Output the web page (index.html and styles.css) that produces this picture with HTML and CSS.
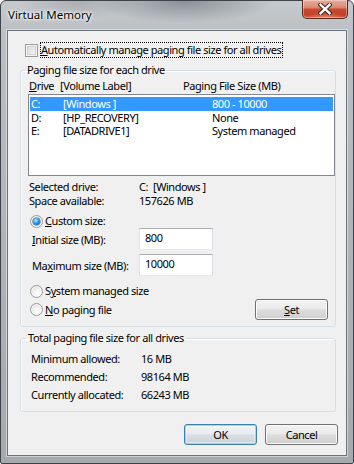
FILE: index.html
```html
<!DOCTYPE html>
<html>
<head>
<meta charset="utf-8">
<title>Virtual Memory</title>
<link rel="stylesheet" href="styles.css">
</head>
<body>
<div class="window">
  <div class="titlebar">
    <span class="title">Virtual Memory</span>
    <button class="close" aria-label="Close">
      <svg width="14" height="12" viewBox="0 0 14 12">
        <path d="M2.5 1.8 L11.5 10.2 M11.5 1.8 L2.5 10.2" stroke="#3b2420" stroke-width="4.4" stroke-linecap="square" fill="none"/>
        <path d="M2.5 1.8 L11.5 10.2 M11.5 1.8 L2.5 10.2" stroke="#ffffff" stroke-width="2.4" stroke-linecap="square" fill="none"/>
      </svg>
    </button>
  </div>
  <div class="client">
    <div class="auto-row">
      <span class="checkbox"></span>
      <span class="focus"><u>A</u>utomatically manage paging file size for all drives</span>
    </div>

    <fieldset class="group g1">
      <legend>Paging file size for each drive</legend>
      <div class="list-head">
        <span><u>D</u>rive</span><span>[Volume Label]</span><span>Paging File Size (MB)</span>
      </div>
      <div class="listbox">
        <div class="lrow sel"><span>C:</span><span>[Windows ]</span><span>800 - 10000</span></div>
        <div class="lrow"><span>D:</span><span>[HP_RECOVERY]</span><span>None</span></div>
        <div class="lrow"><span>E:</span><span>[DATADRIVE1]</span><span>System managed</span></div>
      </div>
      <div class="info">
        <span>Selected drive:</span><span>C:&nbsp; [Windows ]</span>
        <span>Space available:</span><span>157626 MB</span>
      </div>
      <div class="radio-row custom"><span class="radio on"></span><span><u>C</u>ustom size:</span></div>
      <div class="field-row"><span><u>I</u>nitial size (MB):</span><span class="input">800</span></div>
      <div class="field-row second"><span>Ma<u>x</u>imum size (MB):</span><span class="input">10000</span></div>
      <div class="radio-row sys"><span class="radio"></span><span>S<u>y</u>stem managed size</span></div>
      <div class="last-row">
        <div class="radio-row"><span class="radio"></span><span><u>N</u>o paging file</span></div>
        <button class="btn set"><u>S</u>et</button>
      </div>
    </fieldset>

    <fieldset class="group g2">
      <legend>Total paging file size for all drives</legend>
      <div class="totals">
        <span>Minimum allowed:</span><span>16 MB</span>
        <span>Recommended:</span><span>98164 MB</span>
        <span>Currently allocated:</span><span>66243 MB</span>
      </div>
    </fieldset>

    <div class="buttons">
      <button class="btn default">OK</button>
      <button class="btn">Cancel</button>
    </div>
  </div>
</div>
</body>
</html>
```

FILE: styles.css
```css
* { box-sizing: border-box; }
html, body { margin: 0; padding: 0; }
body {
  width: 354px;
  height: 464px;
  overflow: hidden;
  background: #ffffff;
  font-family: "Noto Sans", "Liberation Sans", sans-serif;
  font-size: 11px;
  letter-spacing: -0.42px;
  color: #000;
}
u { text-decoration-thickness: 1px; text-underline-offset: 1px; }

.window {
  width: 354px;
  height: 464px;
  border: 1px solid #3d434a;
  border-radius: 6px 6px 2px 2px;
  padding: 0 6px 7px 6px;
  background:
    radial-gradient(ellipse 90px 22px at 52% 0, rgba(70,74,80,0.45), rgba(70,74,80,0) 100%),
    radial-gradient(ellipse 60px 18px at 22% 0, rgba(90,94,100,0.25), rgba(90,94,100,0) 100%),
    linear-gradient(#c6cacd 0, #bcc0c4 30px, #aeb2b6 60%, #a6aaae 100%);
  display: flex;
  flex-direction: column;
}

.titlebar {
  height: 29px;
  flex: none;
  display: flex;
  align-items: flex-start;
  justify-content: space-between;
}
.title {
  margin: 6px 0 0 1px;
  font-size: 11.5px;
  letter-spacing: 0;
  line-height: 15px;
  text-shadow: 0 0 5px #fff, 0 0 3px #fff, 0 0 2px rgba(255,255,255,0.8);
}
.close {
  width: 46px;
  height: 19px;
  margin: -1px -1px 0 0;
  padding: 0;
  border: 1px solid #5a2a22;
  border-top: none;
  border-radius: 0 0 5px 5px;
  background:
    radial-gradient(ellipse 20px 6px at 50% 100%, rgba(255,170,130,0.55), rgba(255,170,130,0) 100%),
    linear-gradient(#e8ab9c 0, #de8d78 40%, #c84a31 52%, #c13f28 80%, #cf5a3e 100%);
  box-shadow: inset 0 0 0 1px rgba(255,255,255,0.35);
  display: flex;
  align-items: center;
  justify-content: center;
}

.client {
  height: 426px;
  border: 1px solid #6b737b;
  background: #f0f0f0;
  padding: 11px 10px 0 12px;
  box-shadow: 0 0 0 1px rgba(255,255,255,0.45);
}

.auto-row {
  display: flex;
  align-items: center;
  height: 16px;
}
.checkbox {
  width: 13px;
  height: 13px;
  margin-left: 5px;
  border: 1px solid #9a9b9c;
  background: linear-gradient(135deg, #d6d6d6 0, #e9e9e9 50%, #f9f9f9 100%);
  box-shadow: inset 0 0 0 1px #f6f6f6, inset 0 0 0 2px #d0d0d0;
}
.focus {
  margin-left: 2px;
  border: 1px dotted #000;
  line-height: 14px;
  padding-right: 1px;
}

.group {
  margin: 5px 0 0 0;
  padding: 0;
  min-width: 0;
  border: 1px solid #d5dfe5;
  border-radius: 3px;
  box-shadow: inset 1px 1px 0 #fff;
}
.group legend {
  padding: 0 2px;
  margin-left: 4px;
  line-height: 14px;
}
.g1 { padding-bottom: 6px; }

.list-head {
  display: grid;
  grid-template-columns: 31px 123px auto;
  padding-left: 8px;
  margin-top: 2px;
  line-height: 14px;
}
.listbox {
  height: 82px;
  margin: 1px 0 0 7px;
  border: 1px solid #828790;
  background: #fff;
  padding: 2px 1px 0 1px;
}
.lrow {
  display: grid;
  grid-template-columns: 32px 149px auto;
  height: 13.5px;
  line-height: 13.5px;
  padding-left: 1px;
}
.lrow.sel { background: #3399ff; color: #fff; }

.info {
  display: grid;
  grid-template-columns: 110px auto;
  padding-left: 8px;
  margin-top: 4px;
  line-height: 14px;
}

.radio-row {
  display: flex;
  align-items: center;
  gap: 2px;
  height: 14px;
  line-height: 14px;
  padding-left: 9px;
}
.radio-row.custom { margin-top: 6px; }
.radio-row.sys { margin-top: 8px; }
.radio {
  width: 13px;
  height: 13px;
  border-radius: 50%;
  border: 1px solid #999b9d;
  background: radial-gradient(circle at 60% 65%, #ffffff 0, #f1f1f1 40%, #d2d2d2 100%);
  box-shadow: inset 0 0 0 1px rgba(255,255,255,0.7);
  flex: none;
  display: flex;
  align-items: center;
  justify-content: center;
}
.radio.on::after {
  content: "";
  width: 7px;
  height: 7px;
  border-radius: 50%;
  background: radial-gradient(circle at 40% 35%, #b9ecff 0, #3aa2ea 40%, #1261b3 80%, #0d4c93 100%);
  box-shadow: 0 0 0 0.5px #1a4f86;
}

.field-row {
  display: grid;
  grid-template-columns: 107px 74px;
  align-items: center;
  height: 22px;
  padding-left: 11px;
}
.field-row.second { margin-top: 4px; }
.input {
  display: block;
  width: 74px;
  height: 22px;
  background: #fff;
  border: 1px solid;
  border-color: #abadb3 #dbdfe6 #e3e9ef #e2e3ea;
  padding: 0 5px;
  line-height: 18px;
}

.last-row {
  display: flex;
  align-items: center;
  height: 21px;
  margin-top: 1px;
}
.last-row .btn { margin-left: auto; margin-right: 7px; }

.btn {
  width: 73px;
  height: 21px;
  padding: 0;
  border: 1px solid #707070;
  border-radius: 3px;
  background: linear-gradient(#f2f2f2 0, #ebebeb 45%, #dddddd 52%, #cfcfcf 100%);
  box-shadow: inset 0 0 0 1px #fbfbfb;
  font: inherit;
  letter-spacing: inherit;
  color: #000;
  line-height: 17px;
}
.btn.default {
  border-color: #3c7fb1;
  box-shadow: inset 0 0 0 1px #8fdcf8, inset 0 0 0 2px rgba(255,255,255,0.4);
  background: linear-gradient(#f0f4f7 0, #e8edf1 45%, #d9dfe4 52%, #cbd2d8 100%);
}

.g2 { margin-top: 4px; padding-bottom: 7px; }
.g2 legend { margin-left: 5px; }
.totals {
  display: grid;
  grid-template-columns: 110px auto;
  padding-left: 10px;
  margin-top: 5px;
  line-height: 18px;
}

.buttons {
  display: flex;
  justify-content: flex-end;
  gap: 8px;
  margin-top: 12px;
  margin-right: -2px;
}
```
